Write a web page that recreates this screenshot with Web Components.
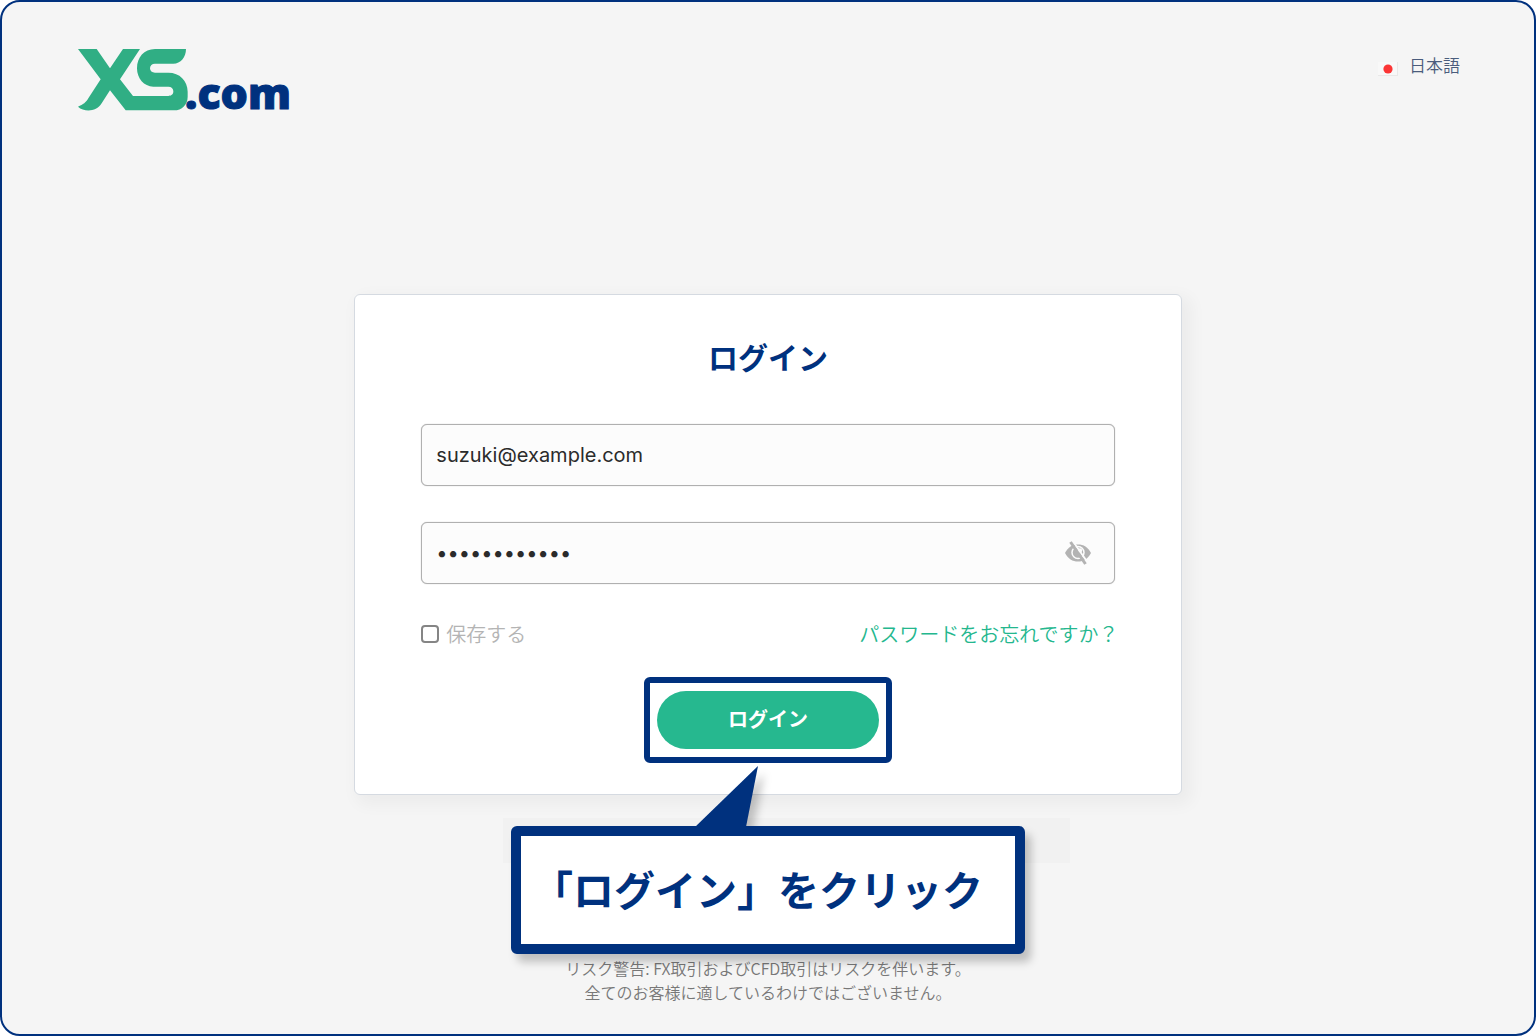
<!DOCTYPE html>
<html lang="ja">
<head>
<meta charset="utf-8">
<meta name="viewport" content="width=device-width, initial-scale=1">
<title>ログイン</title>
<style>
  body {
    margin: 0;
    background: #fff;
    color: #2b2b2b;
    font-family: "Noto Sans CJK JP", sans-serif;
  }
</style>
</head>
<body>
<xs-page>
  <xs-logo slot="header"></xs-logo>
  <xs-language slot="header">日本語</xs-language>

  <xs-card>
    <span slot="title">ログイン</span>
    <xs-field type="email" label="メール" value="suzuki@example.com"></xs-field>
    <xs-field type="password" label="パスワード" value="passw0rd1234"></xs-field>
    <xs-options>
      <span slot="remember">保存する</span>
      <span slot="forgot">パスワードをお忘れですか？</span>
    </xs-options>
    <xs-submit>ログイン</xs-submit>
    <xs-callout slot="callout">「ログイン」をクリック</xs-callout>
  </xs-card>

  <xs-risk slot="footer">リスク警告: FX取引およびCFD取引はリスクを伴います。<br>全てのお客様に適しているわけではございません。</xs-risk>
</xs-page>

<script>
class XsPage extends HTMLElement {
  constructor() {
    super();
    this.attachShadow({ mode: "open" });
    this.shadowRoot.innerHTML = `
      <style>
        :host {
          box-sizing: border-box;
          display: grid;
          grid-template-rows: auto 1fr auto;
          min-height: 100vh;
          background: #f5f5f5;
          border: 2px solid #00317e;
          border-radius: 20px;
        }

        header {
          display: flex;
          align-items: flex-start;
          justify-content: space-between;
          padding: 46px 74px 4px 76px;
        }

        main {
          display: flex;
          align-items: center;
          justify-content: center;
        }

        footer {
          padding-bottom: 30px;
        }
      </style>
      <header><slot name="header"></slot></header>
      <main><slot></slot></main>
      <footer><slot name="footer"></slot></footer>
    `;
  }
}

class XsLogo extends HTMLElement {
  constructor() {
    super();
    this.attachShadow({ mode: "open" });
    this.shadowRoot.innerHTML = `
      <style>
        :host { display: block; }
        svg { display: block; overflow: visible; }
        text {
          fill: #00317e;
          stroke: #00317e;
          stroke-width: 1;
          font: 800 43px "Open Sans", sans-serif;
        }
      </style>
      <svg width="220" height="80" viewBox="0 0 220 80" role="img" aria-label="XS.com">
        <path transform="translate(-18 -18) scale(.33333)" fill="#30ae84"
          d="M54 57H110L150 115L189 57H240L180 148L219 198H325C333 198 340 194 340 184C340 175 334 170 325 170H280C252 170 231 145 231 115C231 82 252 57 285 57H378C378 82 362 101 340 101H285C276 101 270 106 270 115C270 123 276 128 285 128H325C359 128 383 152 383 185V200C383 224 366 241 342 241H197L150 181L125 220C109 246 73 247 54 230C70 224 78 217 85 205L122 148Z"/>
        <text x="107" y="61">.com</text>
      </svg>
    `;
  }
}

class XsLanguage extends HTMLElement {
  constructor() {
    super();
    this.attachShadow({ mode: "open" });
    this.shadowRoot.innerHTML = `
      <style>
        :host { display: block; padding-top: 5px; }
        button {
          display: flex;
          align-items: center;
          gap: 11px;
          padding: 0;
          border: 0;
          background: none;
          color: #4a5c7c;
          font-family: inherit;
          font-size: 17px;
          font-weight: 350;
          line-height: 24px;
          cursor: pointer;
        }
        svg { margin-top: 8px; }
      </style>
      <button type="button">
        <svg width="20" height="14" viewBox="0 0 20 14" aria-hidden="true">
          <rect width="20" height="14" fill="#e8e8e8"/>
          <rect width="19" height="13" fill="#f8f8f8"/>
          <circle cx="10" cy="7" r="4.6" fill="#fb3535"/>
        </svg>
        <span><slot></slot></span>
      </button>
    `;
  }
}

class XsCard extends HTMLElement {
  constructor() {
    super();
    this.attachShadow({ mode: "open" });
    this.shadowRoot.innerHTML = `
      <style>
        :host {
          box-sizing: border-box;
          display: block;
          position: relative;
          width: 54%;
          min-width: 640px;
          padding: 38px 66px 31px;
          background: #fff;
          border: 1px solid #d5dae1;
          border-radius: 6px;
          box-shadow: 6px 6px 16px 4px rgba(0, 0, 0, 0.04);
        }

        h1 {
          margin: 0 0 45px;
          color: #00317e;
          font-size: 30px;
          font-weight: 700;
          line-height: 46px;
          text-align: center;
        }

        form {
          display: flex;
          flex-direction: column;
          gap: 36px;
        }
      </style>
      <h1><slot name="title"></slot></h1>
      <form><slot></slot></form>
      <slot name="callout"></slot>
    `;
  }
}

class XsField extends HTMLElement {
  constructor() {
    super();
    this.attachShadow({ mode: "open" });
    const type = this.getAttribute("type");
    this.shadowRoot.innerHTML = `
      <style>
        :host {
          box-sizing: border-box;
          display: flex;
          align-items: center;
          height: 62px;
          padding: 0 22px 0 14px;
          background: #fcfcfc;
          border: 1px solid #b0b0b0;
          border-radius: 6px;
          box-shadow: 0 0 1px #b0b0b0;
        }

        input {
          flex: 1;
          min-width: 0;
          padding: 0;
          border: 0;
          outline: 0;
          background: none;
          color: #2b2b2b;
          font: 20px/30px Inter, sans-serif;
        }

        button {
          display: flex;
          padding: 0;
          border: 0;
          background: none;
          cursor: pointer;
        }
      </style>
      <input type="${type}" aria-label="${this.getAttribute("label")}" value="${this.getAttribute("value")}">
      ${type === "password" ? `
      <button type="button" aria-label="表示">
        <svg width="28" height="26" viewBox="0 0 28 26">
          <path fill="#b3b3b3" d="M1 13C4 7 8.500 4.500 14 4.500S24 7 27 13C24 19 19.500 21.500 14 21.500S4 19 1 13Z"/>
          <circle cx="14" cy="12.500" r="6" fill="none" stroke="#fcfcfc" stroke-width="1.500"/>
          <circle cx="16" cy="10.500" r="2.200" fill="#fcfcfc"/>
          <path stroke="#fcfcfc" stroke-width="2" d="M9 1.500L24 23"/>
          <path stroke="#b3b3b3" stroke-width="3" d="M6.500 2L21.500 24"/>
        </svg>
      </button>` : ""}
    `;
  }
}

class XsOptions extends HTMLElement {
  constructor() {
    super();
    this.attachShadow({ mode: "open" });
    this.shadowRoot.innerHTML = `
      <style>
        :host {
          display: flex;
          align-items: center;
          justify-content: space-between;
          margin-right: -4px;
          font-size: 20px;
          font-weight: 350;
          line-height: 28px;
        }

        label {
          display: flex;
          align-items: center;
          gap: 7px;
          color: #b4b4b4;
        }

        input {
          appearance: none;
          box-sizing: border-box;
          width: 18px;
          height: 18px;
          margin: 0;
          background: #fff;
          border: 2px solid #858585;
          border-radius: 4px;
        }

        a {
          color: #24b78e;
          text-decoration: none;
        }
      </style>
      <label><input type="checkbox"><slot name="remember"></slot></label>
      <a href="#"><slot name="forgot"></slot></a>
    `;
  }
}

class XsSubmit extends HTMLElement {
  constructor() {
    super();
    this.attachShadow({ mode: "open" });
    this.shadowRoot.innerHTML = `
      <style>
        :host {
          align-self: center;
          display: block;
          margin-top: -7px;
          padding: 8px 7px;
          border: 6px solid #00317e;
          border-radius: 6px;
        }

        button {
          display: block;
          width: 222px;
          height: 58px;
          padding: 0 0 2px;
          border: 0;
          border-radius: 29px;
          background: #26b88f;
          color: #fff;
          font-family: inherit;
          font-size: 20px;
          font-weight: 700;
          line-height: 28px;
          cursor: pointer;
        }
      </style>
      <button type="submit"><slot></slot></button>
    `;
  }
}

class XsCallout extends HTMLElement {
  constructor() {
    super();
    this.attachShadow({ mode: "open" });
    this.shadowRoot.innerHTML = `
      <style>
        :host {
          position: absolute;
          top: calc(100% + 32px);
          left: 50%;
          transform: translateX(-50%);
          z-index: 1;
        }

        /* faint band behind the bubble */
        :host::before {
          content: "";
          position: absolute;
          z-index: -1;
          top: -8px;
          left: -8px;
          right: -45px;
          height: 45px;
          background: #f1f1f1;
        }

        #bubble {
          position: relative;
          filter: drop-shadow(6px 8px 4px rgba(0, 0, 0, 0.22));
        }

        svg {
          position: absolute;
          bottom: 100%;
          left: 184px;
          margin-bottom: -1px;
        }

        p {
          margin: 0;
          padding: 22px 32px 26px 11px;
          background: #fff;
          border: 10px solid #00317e;
          border-radius: 6px;
          color: #00317e;
          font-size: 41px;
          font-weight: 700;
          line-height: 60px;
          white-space: nowrap;
        }
      </style>
      <div id="bubble">
        <svg width="64" height="61" viewBox="0 0 64 61" aria-hidden="true">
          <path fill="#00317e" d="M0 61L63 0L51 61Z"/>
        </svg>
        <p><slot></slot></p>
      </div>
    `;
  }
}

class XsRisk extends HTMLElement {
  constructor() {
    super();
    this.attachShadow({ mode: "open" });
    this.shadowRoot.innerHTML = `
      <style>
        :host {
          display: block;
          color: #787878;
          font-size: 16px;
          font-weight: 350;
          line-height: 24px;
          text-align: center;
        }
      </style>
      <slot></slot>
    `;
  }
}

customElements.define("xs-page", XsPage);
customElements.define("xs-logo", XsLogo);
customElements.define("xs-language", XsLanguage);
customElements.define("xs-card", XsCard);
customElements.define("xs-field", XsField);
customElements.define("xs-options", XsOptions);
customElements.define("xs-submit", XsSubmit);
customElements.define("xs-callout", XsCallout);
customElements.define("xs-risk", XsRisk);
</script>
</body>
</html>
